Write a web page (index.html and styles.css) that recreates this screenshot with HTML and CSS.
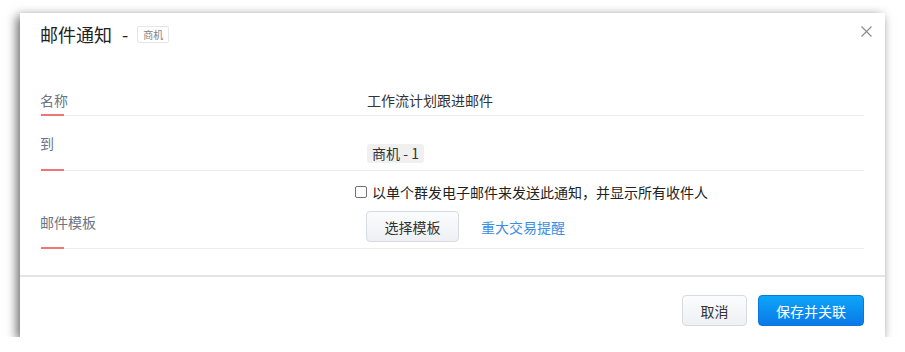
FILE: index.html
```html
<!DOCTYPE html>
<html lang="zh">
<head>
<meta charset="utf-8">
<link rel="stylesheet" href="styles.css">
</head>
<body>
<div class="modal">
  <div class="header">
    <h1 class="title">邮件通知 <span class="dash">-</span> <span class="obj-tag">商机</span></h1>
    <button class="close" aria-label="关闭">
      <svg width="11" height="11" viewBox="0 0 11 11"><path d="M0.5 0.5 L10.5 10.5 M10.5 0.5 L0.5 10.5" stroke="#8a8a8a" stroke-width="1.1" fill="none"/></svg>
    </button>
  </div>
  <div class="body">
    <div class="row row-name">
      <div class="label">名称</div>
      <div class="value">工作流计划跟进邮件</div>
    </div>
    <div class="row row-to">
      <div class="label">到</div>
      <div class="value"><span class="chip">商机 - 1</span></div>
    </div>
    <div class="row row-tpl">
      <div class="label">邮件模板</div>
      <div class="value">
        <label class="check"><span class="box"></span>以单个群发电子邮件来发送此通知，并显示所有收件人</label>
        <div class="tpl-actions">
          <button class="btn">选择模板</button>
          <a class="link" href="#">重大交易提醒</a>
        </div>
      </div>
    </div>
  </div>
  <div class="footer">
    <button class="btn btn-cancel">取消</button>
    <button class="btn btn-primary">保存并关联</button>
  </div>
</div>
</body>
</html>
```

FILE: styles.css
```css
* { box-sizing: border-box; }
html, body { margin: 0; padding: 0; background: #fff; }
body {
  font-family: "Noto Sans CJK SC", "Noto Sans", "Liberation Sans", sans-serif;
  font-size: 14px;
  color: #333;
}
.modal {
  position: relative;
  margin: 13px 0 0 20px;
  width: 865px;
  height: 324px;
  background: #fff;
  box-shadow: -3px 3px 10px rgba(0,0,0,0.6);
  display: flex;
  flex-direction: column;
}
.header {
  height: 72px;
  padding: 10px 20px 0;
}
.title {
  margin: 0;
  font-size: 18px;
  font-weight: normal;
  line-height: 22px;
  color: #222;
  display: flex;
  align-items: center;
}
.dash { margin: 0 9px 0 10px; }
.obj-tag {
  display: inline-block;
  font-size: 10px;
  line-height: 15px;
  padding: 0 5px;
  color: #808080;
  border: 1px solid #e6e6e6;
  border-radius: 2px;
}
.close {
  position: absolute;
  top: 13px;
  right: 13px;
  padding: 0;
  border: 0;
  background: none;
  width: 11px;
  height: 11px;
  line-height: 0;
}
.body {
  padding: 0 21px 0 20px;
}
.row {
  display: flex;
  border-bottom: 1px solid #ededed;
}
.label {
  position: relative;
  width: 327px;
  flex: none;
  color: #6b7585;
  line-height: 20px;
}
.label::after {
  content: "";
  position: absolute;
  left: 1px;
  bottom: -1px;
  width: 23px;
  height: 2px;
  background: #f07575;
}
.value { line-height: 20px; }
.row-name { height: 31px; }
.row-name .label { padding-top: 5px; }
.row-name .value { padding-top: 5px; }
.row-to { height: 55px; }
.row-to .label { padding-top: 17px; }
.row-to .value { padding-top: 27px; }
.row-tpl { height: 78px; }
.row-tpl .label { padding-top: 41px; }
.row-tpl .value { padding-top: 11px; }
.chip {
  display: inline-block;
  background: #f0f0f0;
  border-radius: 3px;
  padding: 0 5px;
  line-height: 19px;
}
.check {
  display: flex;
  align-items: center;
  margin-left: -12px;
  color: #222;
}
.box {
  width: 12px;
  height: 12px;
  border: 1.5px solid #707070;
  border-radius: 2px;
  margin-right: 5px;
}
.tpl-actions {
  margin-top: 9px;
  margin-left: -1px;
  display: flex;
  align-items: center;
  gap: 22px;
}
.btn {
  font-family: inherit;
  font-size: 14px;
  color: #333;
  height: 31px;
  border: 1px solid #d6dbe3;
  border-radius: 4px;
  background: linear-gradient(#fbfcfd, #eef0f4);
  padding: 0;
}
.tpl-actions .btn { width: 93px; }
.link {
  color: #3d8ee3;
  text-decoration: none;
}
.footer {
  margin-top: 26px;
  border-top: 2px solid #e5e5e5;
  padding: 18px 21px 0 0;
  display: flex;
  justify-content: flex-end;
  gap: 11px;
}
.btn-cancel { width: 65px; }
.btn-primary {
  width: 106px;
  color: #fff;
  border: 1px solid #0a76e0;
  background: linear-gradient(#0ca6f8, #0a78e8);
}
```
